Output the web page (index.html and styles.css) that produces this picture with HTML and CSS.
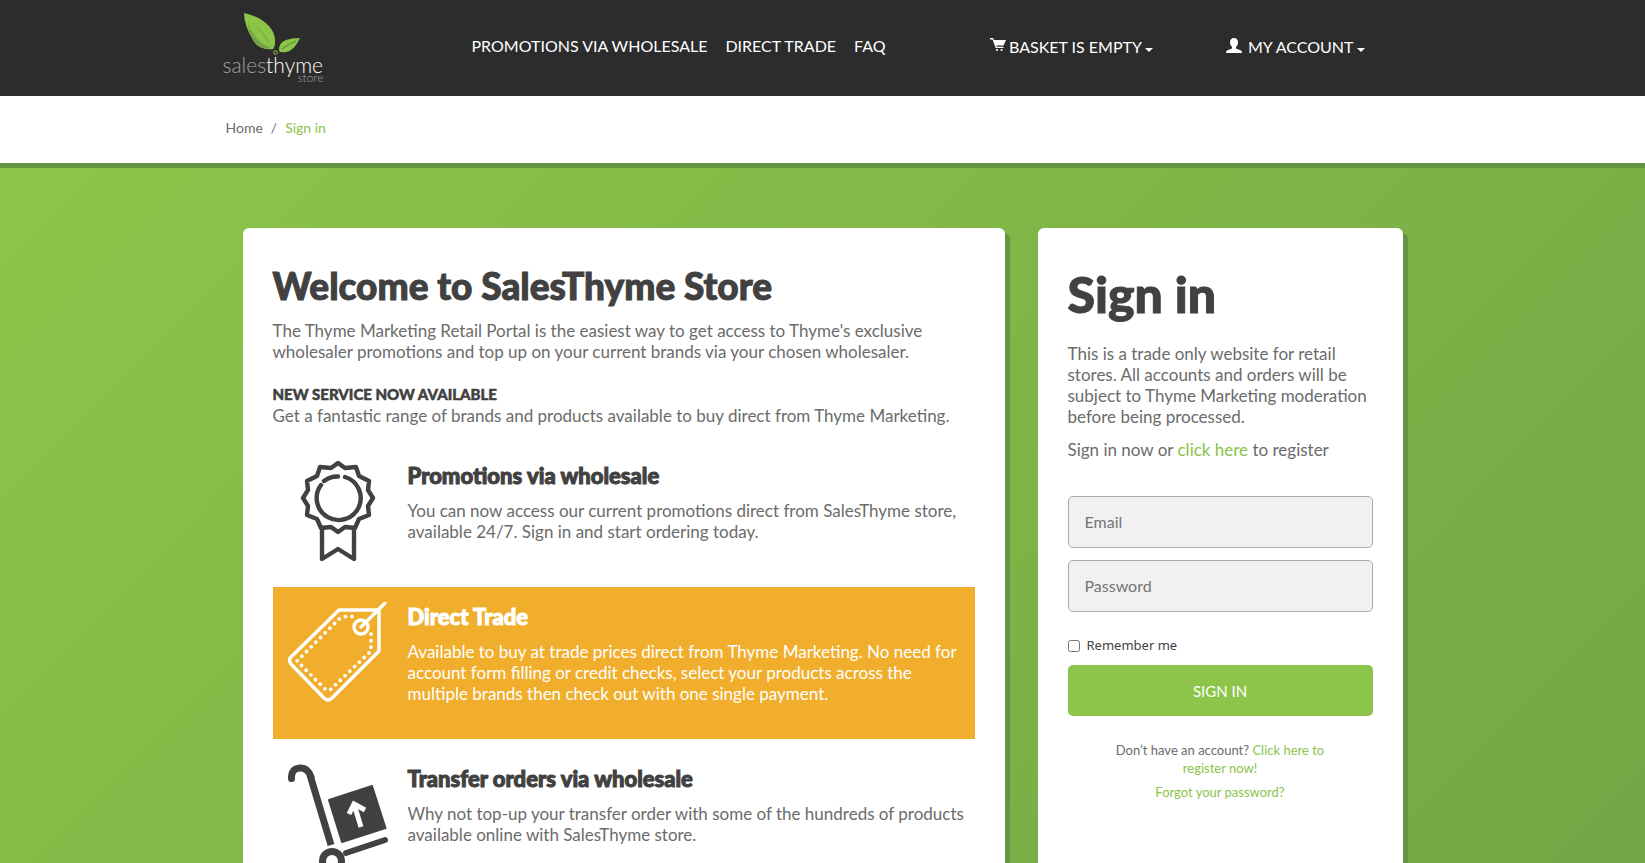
FILE: index.html
```html
<!DOCTYPE html>
<html lang="en">
<head>
    <meta charset="UTF-8">
    <meta name="viewport" content="width=device-width, initial-scale=1.0">
    <title>Sign in - SalesThyme Store</title>
    <link rel="stylesheet" href="styles.css">
</head>
<body>
    <header class="header">
        <div class="container header-inner">
            <a class="logo" href="#" aria-label="salesthyme store">
                <svg class="logo-leaves" width="100" height="43" viewBox="0 0 100 43">
                    <path d="M21 0C39 4 53 15 52 29Q52 34 50 36Q37 38 30 27Q21 12 21 0Z" fill="#8dc549"/>
                    <path d="M25 7Q28 26 48 35Q35 37 30 27Q25 18 25 7Z" fill="#70a445"/>
                    <path d="M25 7Q37 15 48 35Q45 19 25 7Z" fill="#7cb447"/>
                    <path d="M77 25Q71 38 63 39Q58 40 56 38Q55 30 63 27Q69 25 77 25Z" fill="#8dc549"/>
                    <path d="M73 28Q67 30 59 36" fill="none" stroke="#548038" stroke-width="1"/>
                    <circle cx="52.500" cy="39.500" r="1.800" fill="none" stroke="#8dc549" stroke-width="1"/>
                </svg>
                <span class="logo-name"><span class="logo-dim">sales</span>thyme</span>
                <span class="logo-sub">store</span>
            </a>
            <nav class="main-nav">
                <a href="#">PROMOTIONS VIA WHOLESALE</a>
                <a href="#">DIRECT TRADE</a>
                <a href="#">FAQ</a>
            </nav>
            <div class="user-nav">
                <a class="basket" href="#">
                    <svg width="16" height="14" viewBox="0 0 16 14" fill="#fff">
                        <path d="M0 0H3L4 2H16L13.500 7.500H6.300L6.700 8.700H13.500V10H5.700L2.500 1.500H0Z"/>
                        <circle cx="7" cy="12" r="1.100"/><circle cx="11.500" cy="12" r="1.100"/>
                    </svg>
                    BASKET IS EMPTY <span class="caret"></span>
                </a>
                <a class="account" href="#">
                    <svg width="16" height="15" viewBox="0 0 16 15" fill="#fff">
                        <path d="M8 0Q12 0 12 4.500Q12 7.500 10 9V10.500L15 12.500Q16 13 16 15H0Q0 13 1 12.500L6 10.500V9Q4 7.500 4 4.500Q4 0 8 0Z"/>
                    </svg>
                    MY ACCOUNT <span class="caret"></span>
                </a>
            </div>
        </div>
    </header>

    <div class="breadcrumb">
        <div class="container">
            <a href="#">Home</a><span class="slash">/</span><span class="current">Sign in</span>
        </div>
    </div>

    <main class="main">
        <div class="cards">
            <section class="card welcome">
                <h1>Welcome to SalesThyme Store</h1>
                <p>The Thyme Marketing Retail Portal is the easiest way to get access to Thyme's exclusive wholesaler promotions and top up on your current brands via your chosen wholesaler.</p>
                <p class="new-service"><strong>NEW SERVICE NOW AVAILABLE</strong><br>
                Get a fantastic range of brands and products available to buy direct from Thyme Marketing.</p>

                <div class="feature">
                    <svg class="icon" viewBox="0 0 100 100" fill="none" stroke="#414141" stroke-width="4.400" stroke-linejoin="round" stroke-linecap="round">
                        <path d="M50 2L57 7L68 6L71 15L81 20L80 29L85 37L80 45L81 54L71 58L67 67L57 66L50 71L43 66L33 67L29 58L19 54L20 45L15 37L20 29L19 20L29 15L32 6L43 7Z"/>
                        <path d="M57 16A22 22 0 1 1 33 24M36 20Q43 15 50 15.500"/>
                        <path d="M34 67V98L50 88L66 98V67"/>
                    </svg>
                    <div class="feature-text">
                        <h2>Promotions via wholesale</h2>
                        <p>You can now access our current promotions direct from SalesThyme store, available 24/7. Sign in and start ordering today.</p>
                    </div>
                </div>

                <div class="feature highlight">
                    <svg class="icon" viewBox="0 0 100 100" fill="none" stroke="#fff" stroke-width="3.400" stroke-linejoin="round" stroke-linecap="round">
                        <path d="M51 8H91V49L44 96Q40 100 36 96L3 62Q0 58 3 55Z"/>
                        <path d="M64 14.500H58L51 17L9 59L38 88H42L83 49V31" stroke-width="3.800" stroke-dasharray="0 6.600"/>
                        <circle cx="73" cy="25" r="7"/>
                        <path d="M73 25L97 1"/>
                    </svg>
                    <div class="feature-text">
                        <h2>Direct Trade</h2>
                        <p>Available to buy at trade prices direct from Thyme Marketing. No need for account form filling or credit checks, select your products across the multiple brands then check out with one single payment.</p>
                    </div>
                </div>

                <div class="feature">
                    <svg class="icon" viewBox="0 0 100 100" fill="none" stroke="#414141" stroke-linejoin="round" stroke-linecap="round">
                        <path d="M3.500 14.500Q3 4 13 4Q20 4 23 13" stroke-width="7"/>
                        <path d="M22 11L43 81" stroke-width="7" stroke-linecap="butt"/>
                        <path d="M41 36L84 22L97.500 64L54 78Z" fill="#414141" stroke-width="2"/>
                        <path d="M73 63L66 40M61 50L66 40L77 46" stroke="#fff" stroke-width="5" stroke-linecap="butt" stroke-linejoin="miter"/>
                        <path d="M58 89L97 76" stroke-width="6"/>
                        <circle cx="44" cy="97" r="9.500" stroke-width="7"/>
                    </svg>
                    <div class="feature-text">
                        <h2>Transfer orders via wholesale</h2>
                        <p>Why not top-up your transfer order with some of the hundreds of products available online with SalesThyme store.</p>
                    </div>
                </div>
            </section>

            <section class="card signin">
                <h2>Sign in</h2>
                <p>This is a trade only website for retail stores. All accounts and orders will be subject to Thyme Marketing moderation before being processed.</p>
                <p>Sign in now or <a href="#">click here</a> to register</p>
                <form>
                    <input class="field" type="email" placeholder="Email" aria-label="Email">
                    <input class="field" type="password" placeholder="Password" aria-label="Password">
                    <div class="remember">
                        <input type="checkbox" id="remember">
                        <label for="remember">Remember me</label>
                    </div>
                    <button type="submit">SIGN IN</button>
                </form>
                <div class="help">
                    <p>Don’t have an account? <a href="#">Click here to register now!</a></p>
                    <p><a href="#">Forgot your password?</a></p>
                </div>
            </section>
        </div>
    </main>
</body>
</html>
```
FILE: styles.css
```css
* {
    box-sizing: border-box;
}

body {
    margin: 0;
    font-family: Lato, "Open Sans", sans-serif;
    font-size: 17px;
    line-height: 21px;
    color: #6b6b6b;
    background-color: #fff;
}

a {
    color: #8bc34a;
    text-decoration: none;
}

h1, h2, p {
    margin: 0;
}

/* thicken the headings a bit, Lato bold is too light */
h1, h2, strong {
    font-weight: 900;
    color: #414141;
    -webkit-text-stroke: 1px currentColor;
}

.container {
    max-width: 1200px;
    margin: 0 auto;
}

/* header */
.header {
    height: 96px;
    background-color: #2c2c2c;
}

.header-inner {
    display: flex;
    height: 100%;
}

.header a {
    color: #fff;
}

.logo {
    display: flex;
    flex-direction: column;
    width: 101px;
    padding-top: 13px;
}

.logo-leaves {
    flex-shrink: 0;
}

.logo-name {
    font-size: 21px;
    line-height: 18px;
    font-weight: 300;
}

.logo-dim {
    color: #a0a0a0;
}

.logo-sub {
    font-size: 12px;
    line-height: 8px;
    font-weight: 300;
    text-align: right;
    color: #a0a0a0;
}

.main-nav {
    display: flex;
    gap: 18px;
    margin-left: 148px;
    padding-top: 35px;
    font-size: 16px;
}

.user-nav {
    display: flex;
    flex: 1;
    justify-content: flex-end;
    gap: 73px;
    padding: 36px 58px 0 0;
    font-size: 16px;
}

.user-nav a {
    display: flex;
    gap: 3px;
}

.user-nav svg {
    margin-top: 2px;
}

.account svg {
    margin-right: 3px;
}

.caret {
    margin-top: 12px;
    height: 4px;
    border-top: 4px solid #fff;
    border-left: 4px solid transparent;
    border-right: 4px solid transparent;
}

/* breadcrumb */
.breadcrumb {
    padding: 21px 0 25px;
    border-bottom: 5px solid #649444;
    font-size: 14px;
}

.breadcrumb .container {
    padding-left: 3px;
}

.breadcrumb a {
    color: #6b6b6b;
}

.slash {
    margin: 0 8px;
}

.current {
    color: #8bc34a;
}

/* cards */
.main {
    padding: 60px 20px 160px;
    background: linear-gradient(135deg, #8cc549, #70a445);
}

.cards {
    display: flex;
    gap: 33px;
    max-width: 1160px;
    margin: 0 auto;
}

.card {
    padding: 30px;
    background-color: #fff;
    border-radius: 6px;
    box-shadow: 5px 5px 0 #649444;
}

.welcome {
    flex: 1;
}

.welcome h1 {
    margin: 6px 0 12px;
    font-size: 37px;
    line-height: 44px;
}

.new-service {
    margin: 21px 0 20px;
}

.new-service strong {
    font-size: 15px;
    -webkit-text-stroke-width: 0.5px;
}

.feature {
    display: flex;
    gap: 20px;
    padding: 15px 5px 16px 15px;
    margin-bottom: 10px;
}

.icon {
    flex-shrink: 0;
    width: 100px;
    height: 100px;
}

.feature h2 {
    margin: 2px 0 11px;
    font-size: 22px;
    line-height: 26px;
}

.highlight {
    padding-bottom: 35px;
    background-color: #f1ae2d;
    color: #fff;
}

.highlight h2 {
    color: #fff;
}

/* sign in */
.signin {
    width: 365px;
}

.signin h2 {
    margin: 7px 0 20px;
    font-size: 50px;
    line-height: 58px;
}

.signin p {
    margin-bottom: 12px;
}

.field {
    display: block;
    width: 100%;
    height: 52px;
    margin-bottom: 12px;
    padding: 0 16px 1px;
    border: 1px solid #aaa;
    border-radius: 5px;
    background-color: #f1f1f1;
    font-family: inherit;
    font-size: 16px;
}

.field::placeholder {
    color: #757575;
}

form {
    margin-top: 36px;
}

.remember {
    display: flex;
    align-items: center;
    gap: 7px;
    margin: 23px 0 9px;
    font-family: "Noto Sans", sans-serif;
    font-size: 13px;
    color: #414141;
}

.remember input {
    width: 12px;
    height: 12px;
    margin: 0;
}

button {
    width: 100%;
    height: 51px;
    padding: 0;
    border: none;
    border-radius: 5px;
    background-color: #8cc549;
    color: #fff;
    font-family: inherit;
    font-size: 15px;
    cursor: pointer;
}

.help {
    padding: 25px 40px 0;
    font-size: 13px;
    line-height: 18px;
    text-align: center;
}

.help p {
    margin-bottom: 6px;
}
```
